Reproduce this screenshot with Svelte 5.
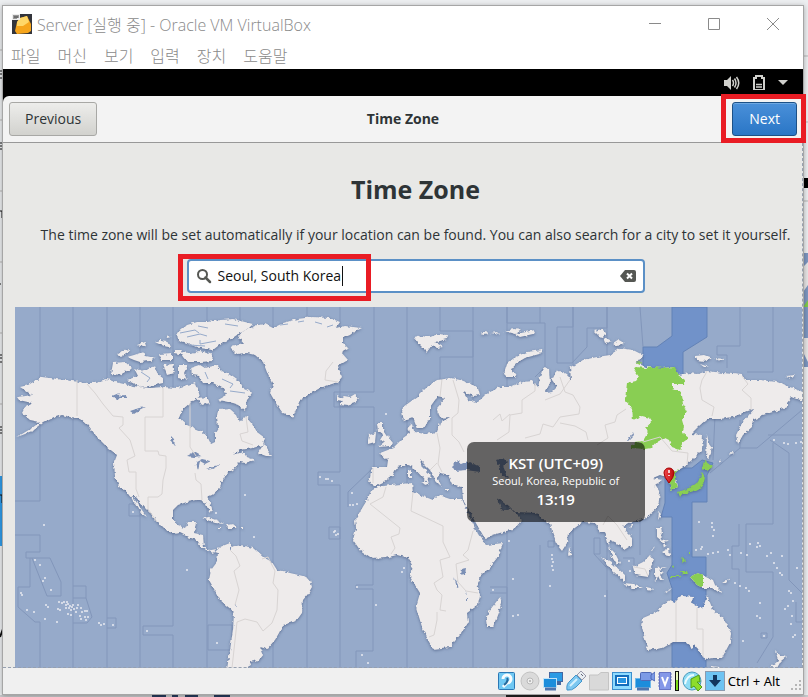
<script>
  let query = $state('Seoul, South Korea');
  const menus = ['파일', '머신', '보기', '입력', '장치', '도움말'];

  const meridians = [240, 273, 307, 407, 473, 507, 573, 607];

  const zoneLines = [
    'M40 307V501H15M15 535H40V552H26V558H50L61 582V596H47L32 558M30 558V587H18V607L35 622H40V668',
    'M73 307V668M73 586H86V598H73M86 598L92 617L87 623H73',
    'M107 307V668M107 618H116V628H107M140 307V668M140 504H129V516H140',
    'M173 307V626H143V635H173V668M207 307V668M208 625H232V650H208Z',
    'M340 307V472H318V485H340V668M374 307V392H334V407H374V467L348 492V507M373 559V585H356V589H373V651H356V668',
    'M329 527H340V539H329Z',
    'M440 307V331H473V357H440V380M507 307V323H545V367L535 377M540 307V323M573 307V327H557V363H572L587 347V328H607V307',
    'M640 307L643 347M740 307V346H717V355H727V368M747 372H773V307M740 420V448L710 473M740 448H757L802 410',
    'M768 435H802M770 440L789 453V524M773 443V524H746V572H773V637L757 663M715 415L713 460',
    'M739 524V546H732V569H739V668M789 524V580L802 593M796 602V622H802M573 524V668M607 590V668M640 505V555',
    'M490 587H507V593H490M507 593V668M540 545V668M548 541H554V547H548ZM594 538H600V554H594V538M594 554L606 567M623 558H634V566',
    'M761 633H767V638H761Z'
  ];

  const land = [
    // North and Central America
    'M42 377L57 379L87 383L92 383L107 379L115 382L133 386L150 388L163 387L177 388L187 385L195 383L198 390L200 397L190 403L182 410L179 418L187 425L203 432L208 438L211 444L215 442L215 433L218 428L217 417L218 410L230 409L237 415L240 422L246 416L252 423L257 432L265 438L263 445L253 448L240 450L233 455L243 452L247 457L255 460L245 463L240 462L233 470L227 473L222 482L220 488L212 495L207 497L212 508L211 513L208 509L205 502L197 500L187 502L178 505L173 510L173 518L177 525L185 528L188 522L196 522L194 533L203 535L204 547L210 550L216 549L213 553L202 548L197 540L188 537L180 533L173 534L157 523L155 518L145 508L134 496L132 496L147 517L142 514L135 503L125 490L120 488L115 477L114 463L117 455L107 447L97 437L88 425L80 418L70 417L62 415L53 418L43 423L33 431L17 437L32 428L40 422L30 420L22 413L25 407L32 403L19 400L17 397L32 395L20 387L28 385Z',
    // Canadian Arctic
    'M113 363L125 362L132 368L120 375L111 374Z',
    'M134 368L140 371L155 366L158 374L163 378L163 383L150 386L140 387L127 380L138 376Z',
    'M127 357L134 355L143 352L146 356L155 358L150 361L140 362L134 360Z',
    'M117 355L123 350L131 349L128 353L121 357ZM137 345L145 342L146 345L140 347Z',
    'M155 342L160 340L167 341L170 347L163 346ZM159 355L172 354L172 360L162 360ZM166 335L171 337L167 338Z',
    'M177 333L187 325L197 322L207 322L220 320L233 319L253 324L247 330L240 333L231 339L223 342L213 350L200 348L187 343L178 340Z',
    'M180 352L190 353L200 351L213 355L212 361L200 362L187 362L183 357ZM175 350L182 350L180 354L175 353Z',
    'M163 365L173 364L175 373L167 375ZM178 365L188 365L184 373L187 380L178 378Z',
    'M191 368L200 365L205 368L217 365L222 371L230 375L240 382L244 389L253 393L247 400L245 410L239 405L233 403L218 400L227 395L222 388L213 383L203 383L199 376L192 375Z',
    'M197 398L207 397L210 403L202 405ZM258 453L265 442L267 449L272 456L266 456Z',
    // Greenland and Iceland
    'M242 332L257 325L265 324L273 328L283 323L297 319L313 317L330 318L340 322L336 328L344 326L362 328L354 332L350 335L343 338L343 343L348 348L341 352L348 360L338 366L342 377L338 382L320 388L308 395L300 400L293 417L283 413L277 405L270 393L273 385L268 375L263 362L255 355L246 353L237 354L230 347L244 344L238 337Z',
    'M337 396L341 398L344 396L350 397L355 394L359 399L354 403L348 405L340 404L343 401L337 400Z',
    // Caribbean
    'M202 518L208 517L217 520L224 524L215 523ZM226 525L233 524L238 528L228 528ZM217 528H221V529H217ZM241 528H244V529H241Z',
    // South America
    'M215 552L220 547L230 543L231 547L240 545L253 548L263 557L272 562L277 570L283 571L290 573L303 576L310 580L312 587L308 594L303 600L302 613L297 620L290 623L283 625L279 633L275 640L267 649L260 647L263 655L259 660L250 662L251 666L246 669L227 669L230 650L233 630L234 612L227 606L220 600L213 587L209 580L211 570L217 562L218 553Z',
    // Atlantic Europe and Svalbard
    'M414 338L422 336L430 337L438 334L448 335L447 339L435 342L443 347L438 348L432 345L427 352L418 343ZM480 334L486 332L489 334L484 335Z',
    'M377 423L383 423L383 429L389 438L393 443L391 446L378 447L384 442L380 440L383 435L378 431ZM369 435L376 433L375 442L368 444L368 440Z',
    // Eurasia
    'M402 412L403 407L417 397L427 387L437 380L452 378L460 380L470 384L478 387L480 395L474 396L463 392L468 400L477 403L485 395L490 392L500 387L510 387L522 382L532 381L538 388L540 377L543 368L549 369L550 383L545 393L552 392L557 387L552 380L557 370L567 375L571 380L570 368L583 360L597 357L610 355L620 348L633 350L643 355L637 363L646 367L662 368L674 367L678 375L690 373L698 374L707 371L723 373L742 375L745 380L760 380L777 382L790 387L803 392V401L792 397L787 403L787 407L773 412L763 415L753 420L752 427L743 435L738 444L736 435L742 423L754 409L748 411L743 413L733 417L720 419L707 419L698 427L691 434L703 435L702 450L692 460L682 468L675 472L674 478L677 482L678 487L671 490L669 480L666 477L660 475L653 478L662 480L655 485L660 493L658 507L647 517L638 521L630 522L623 526L627 532L632 537L632 545L624 550L617 543L610 540L609 547L615 553L620 563L617 565L612 557L608 543L605 532L600 533L595 523L583 522L568 533L567 543L562 551L557 545L552 532L550 523L540 517L537 513L515 512L509 506L500 499L497 500L503 510L510 508L522 520L516 527L510 530L493 535L487 538L484 537L477 525L463 500L462 487L452 484L448 475L440 473L437 477L442 487L435 480L430 470L420 460L422 467L432 477L428 478L427 483L423 478L413 467L407 465L397 467L393 475L383 483L377 486L369 483L372 467L387 467L388 460L380 453L393 448L403 438L410 433L408 426L412 424L414 432L425 434L437 432L440 423L450 417L440 418L437 407L445 398L438 396L430 407L430 417L423 428L417 428L413 418L404 421Z',
    'M426 482L429 483L427 485L420 482ZM408 470L411 469L411 478L408 478ZM442 489H448V490H442ZM462 488L466 487L464 490Z',
    // Arctic Russia
    'M504 374L507 364L515 357L527 352L542 350L543 353L525 358L515 364L512 370L517 377L507 377ZM491 333L497 332L500 335ZM504 331L514 329L521 330L516 334ZM515 334L535 330L533 334L520 337Z',
    'M594 331L602 329L607 334L601 338ZM604 337L612 341L606 343ZM613 344L619 340L624 343L618 346ZM695 356L704 355L712 358L705 361L697 360ZM714 358L725 359L721 361ZM700 364L709 367L704 367ZM786 376L795 375L792 378Z',
    // Africa and Madagascar
    'M378 487L390 485L412 483L413 492L423 496L433 500L438 495L450 499L462 499L467 510L477 533L487 545L503 543L497 558L490 567L480 577L477 583L480 595L478 605L467 613L468 623L460 635L450 647L433 649L428 640L422 627L416 607L420 593L410 577L412 565L408 558L397 555L385 558L373 559L360 550L353 540L356 528L355 520L367 500L371 491Z',
    'M500 597L502 603L493 627L487 627L486 620L489 611Z',
    // Indian Ocean and South-East Asia
    'M569 548L572 555L568 556ZM602 557L612 563L625 575L625 582L615 573L608 566ZM623 583L634 584L643 588L632 588ZM646 587L655 589L654 590L646 589ZM663 593L672 588L669 591Z',
    'M633 567L643 562L650 555L654 560L652 565L648 577L635 575ZM655 568L667 567L659 570L664 573L660 575L664 580L660 580L658 576L656 582L655 575Z',
    'M657 528L661 528L662 533L660 538L664 540L668 542L664 543L657 537ZM662 552L669 548L670 555L667 556ZM663 544L667 546L664 548ZM651 551L656 545L652 551ZM659 512L661 514L658 519ZM630 524L634 525L631 528Z',
    'M707 435L709 443L712 447L710 457L706 459ZM720 460L722 461L718 463ZM731 452L734 453L728 455Z',
    // Australia, New Guinea, New Zealand
    'M643 618L657 612L665 603L671 600L676 602L679 597L683 596L693 597L692 603L702 609L705 602L707 595L713 610L723 618L727 625L731 633L730 643L722 658L714 658L707 659L702 656L700 653L697 648L695 645L692 650L690 646L685 642L673 642L663 648L647 650L646 643L642 627Z',
    'M690 577L697 573L703 575L713 580L715 585L723 593L717 591L712 588L703 588L697 585ZM722 583L730 578L726 583ZM775 650L780 655L786 657L781 661L777 668L771 667L778 661ZM711 666L720 667L716 670L711 668Z'
  ];

  const green = [
    'M636 367L646 368L653 367L663 368L675 367L678 375L685 380L684 384L672 384V388L680 391L682 395L683 404L687 412L682 420L684 427L682 433L689 438L682 443L680 450L672 447L669 440L665 438L657 442L652 448L646 449L630 448L634 443L643 442L648 433L646 428L652 421L650 418L642 416L633 420L632 408L625 400L627 383L636 381L639 377L633 368Z',
    'M678 469L675 474L675 479L678 487L671 490L669 481L667 477L672 473Z',
    'M678 492L684 490L690 488L694 485L698 482L702 472L705 477L704 482L702 487L694 491L687 493L683 493L680 497ZM704 461L709 464L714 466L707 471L702 469Z',
    'M690 577L697 573L703 575V588L697 585L692 579ZM681 571L687 571L688 574L683 574ZM673 565L675 569L672 568ZM683 556L685 561L682 563ZM670 576H680V577H670ZM688 552H690V553H688Z',
    'M636 363L641 362L640 365Z'
  ];

  const lakes = [
    'M112 396L119 393L117 396L125 395L127 398L121 398L117 400ZM130 411L139 408L146 407L140 410L134 414Z',
    'M171 436L174 439L175 446L171 441ZM187 456L194 452L201 456L194 457ZM196 462L202 459L211 461L205 464L200 461L198 470ZM206 470L214 466L220 465L212 469Z',
    'M452 466L458 460L461 464L468 461L480 467L480 472L466 470L455 471ZM496 460L503 458L507 462L503 466L508 478L501 476L500 468Z',
    'M461 569L466 568L465 574L460 575ZM454 577L459 587L457 588ZM466 591L467 600L466 600ZM627 442L633 433L634 436L628 442Z',
    'M230 546L232 549L230 550ZM235 604L237 606H235Z'
  ];

  const borders = [
    'M77 380V416M87 384L95 393L103 404L113 416L123 417V425L119 428L130 440L135 456L127 460L129 472L136 472L136 489L139 497',
    'M163 387V417H145V451H158L159 455L166 456L166 468L163 480L162 494L158 497L148 497L148 509L157 522',
    'M190 403V447L196 456M195 473L196 480L201 484L202 500M246 417L248 432L240 434L242 441L253 445M230 550L236 556L240 566L234 571L239 590L235 605',
    'M262 559L268 557L275 571L273 583L278 590L277 610L272 623L263 631L257 622L245 619L237 622L232 668M338 382L325 380L326 371L333 362',
    'M442 379L440 397M453 380L459 400L458 413L452 418L452 435L459 442L464 452M437 433L440 448L438 464L442 472M430 470L437 463M373 468V483',
    'M535 383L535 391L522 400L522 413L510 415L509 432L497 440M493 420L500 414L502 421L510 414M545 400L560 394L570 380M560 377L565 392L573 395L580 407L579 414L560 417L553 427L543 424L540 434L525 438M560 423L575 426L586 432L588 440',
    'M626 409L617 415L615 422L605 425L608 438L597 445M707 371L705 375L702 380L700 388L702 400L714 407L712 416M742 376L748 384L742 390L751 398L751 410M643 442L660 437L672 451L688 453L687 464M603 525L608 516L617 525L627 540',
    'M386 487L383 497L370 504L400 528L399 534L391 537L395 548L391 554M413 492L411 511L424 517L443 526L443 542L450 557L440 560L443 577L434 583L437 590L442 595L440 610L446 611M437 612V620L434 635L429 637M473 531L468 550L463 555L469 560L456 564L458 582L466 591L478 593',
    'M676 600V642M697 608V629H703V657M634 567L645 569L648 576'
  ];

  const isles = [
    [44, 525], [35, 560], [40, 565], [45, 578], [43, 581], [51, 590], [21, 593], [22, 595], [27, 610], [34, 612], [46, 605], [48, 607], [45, 619], [57, 622],
    [59, 602], [62, 603], [64, 602], [66, 605], [68, 604], [70, 606], [69, 608], [72, 607], [74, 609], [71, 610], [66, 608], [58, 609], [60, 610], [68, 614], [71, 615], [76, 612], [78, 605], [77, 608], [81, 608], [82, 612], [85, 611], [87, 611], [80, 616], [81, 619], [85, 617], [88, 617], [86, 620], [73, 605], [67, 602],
    [99, 623], [101, 625], [104, 624], [113, 625], [147, 631], [187, 570], [133, 512], [245, 495], [216, 513], [217, 643], [254, 537],
    [320, 477], [326, 479], [328, 479], [332, 481], [352, 493], [335, 531], [338, 534], [336, 535], [334, 532], [350, 505], [353, 505], [357, 504],
    [357, 587], [376, 605], [404, 568], [402, 572], [362, 655], [368, 663], [386, 414], [493, 590], [513, 579], [513, 616], [518, 615], [550, 586], [605, 596], [509, 541],
    [552, 555], [552, 559], [553, 562], [552, 566], [553, 570], [699, 522], [712, 523], [712, 527], [714, 530], [713, 536], [696, 550], [701, 549], [702, 547], [708, 554], [713, 553], [718, 552], [728, 550], [730, 555], [741, 553], [747, 555], [750, 544], [757, 547], [758, 543], [760, 546], [767, 556], [771, 553], [782, 556],
    [774, 563], [777, 568], [780, 573], [782, 575], [789, 591], [791, 593], [797, 568], [785, 609], [788, 606], [793, 601], [792, 616], [791, 624], [793, 637], [795, 635], [760, 603], [757, 616], [760, 618], [764, 636], [743, 641], [735, 583], [740, 586], [746, 588], [749, 591], [774, 440], [784, 443], [788, 444], [796, 443], [801, 442], [629, 561], [630, 571]
  ];
</script>

<div class="page">
  <svg class="backdrop" aria-hidden="true" viewBox="0 0 808 697" preserveAspectRatio="none">
    <rect width="808" height="697" fill="#eceef0" />
    <path d="M0 50H3M0 120H3M0 191H3M0 262H3M0 333H3M0 404H3M804 56H808M804 122H808M804 201H808" stroke="#b5b5b5" />
    <path d="M0 71H2M0 74H2M0 78H2M0 143H2M0 146H2M0 149H2M0 211H2V218M0 284H1M0 355H2M0 358H2M0 362H2M0 427H2M0 430H2M0 433H2" stroke="#111" stroke-width="1" fill="none" />
    <path d="M0 476H3V546H0Z" fill="#2f9be8" /><path d="M0 495H2V503" stroke="#111" fill="none" />
    <path d="M0 637L3 629M14 697L20 694" stroke="#111" stroke-width="2" />
    <path d="M803 178H808V188H803Z" fill="#000" />
    <path d="M803 253H808V367H803Z" fill="#7d96c0" /><path d="M803 267L808 262V285L803 292ZM803 338H808V362L803 352Z" fill="#e7e5e5" />
    <path d="M803 307L808 300V307Z" fill="#80ca4b" />
    <path d="M0 695H808V697H0Z" fill="#c9cbcd" />
    <path d="M152 696H166M172 696H178M185 696H198M214 696H230" stroke="#283b5c" stroke-width="2" />
    <path d="M506 696H560" stroke="#222" stroke-width="2" />
  </svg>

  <div class="window">
    <header class="titlebar">
      <svg class="app" viewBox="0 0 20 20" aria-hidden="true">
        <rect width="20" height="20" fill="#33353c" />
        <path d="M8 4L15 2L19 10V17L16 19L5 20L3 17L5 8Z" fill="#f6a51c" />
        <path d="M8 4L15 2L17 8L11 12L5 12L5 8Z" fill="#ffd768" />
        <rect width="8" height="6" fill="#eee" /><path d="M2 1V5M4 1V5M6 1V4M2 3H6" stroke="#444" />
      </svg>
      <span class="name">Server [실행 중] - Oracle VM VirtualBox</span>
      <div class="controls">
        <button aria-label="Minimize"><svg viewBox="0 0 12 12"><path d="M0 5.5H12" /></svg></button>
        <button aria-label="Maximize"><svg viewBox="0 0 12 12"><path d="M.5 .5H11.5V11.5H.5Z" /></svg></button>
        <button aria-label="Close"><svg viewBox="0 0 12 12"><path d="M0 0L12 12M12 0L0 12" /></svg></button>
      </div>
    </header>
    <nav class="menubar">
      {#each menus as menu}<button>{menu}</button>{/each}
    </nav>

    <div class="topbar">
      <svg width="16" height="16" viewBox="0 0 16 16" aria-label="Volume" role="img">
        <path d="M0 5H3L7 1V15L3 11H0Z" fill="#d0d0cc" />
        <path d="M8.500 5Q10.500 8 8.500 11M10.500 3.500Q13.500 8 10.500 12.500M12.500 2Q17 8 12.500 14" fill="none" stroke="#d0d0cc" stroke-width="1.500" />
      </svg>
      <svg width="12" height="16" viewBox="0 0 12 16" aria-label="Battery" role="img">
        <path d="M1 3H3V1H9V3H11V15H1Z" fill="none" stroke="#d0d0cc" stroke-width="2" /><path d="M3 9.500H9M3 12H9" stroke="#d0d0cc" stroke-width="1.500" />
      </svg>
      <svg class="caret" width="10" height="5" viewBox="0 0 10 5" aria-hidden="true"><path d="M0 0H10L5 5Z" fill="#d0d0cc" /></svg>
    </div>

    <div class="headerbar">
      <button class="push">Previous</button>
      <strong>Time Zone</strong>
      <div class="marked next"><button class="push primary">Next</button></div>
    </div>

    <main>
      <section class="intro">
        <h1>Time Zone</h1>
        <p>The time zone will be set automatically if your location can be found. You can also search for a city to set it yourself.</p>
        <div class="search">
          <svg class="lens" viewBox="0 0 16 16" aria-hidden="true"><circle cx="6.500" cy="6.500" r="4.500" fill="none" stroke="#555753" stroke-width="2" /><path d="M9.500 9.500L14 14" stroke="#555753" stroke-width="2.500" stroke-linecap="round" /></svg>
          <input type="text" aria-label="Search for a city" bind:value={query} />
          <span class="cursor"></span>
          <button class="clear" aria-label="Clear"><svg viewBox="0 0 16 12"><path d="M5 0H14Q16 0 16 2V10Q16 12 14 12H5L0 6Z" fill="#555753" /><path d="M7 3.500L12 8.500M12 3.500L7 8.500" stroke="#fff" stroke-width="2" /></svg></button>
          <span class="frame"></span>
        </div>
      </section>

      <div class="map">
        <svg viewBox="15 307 787 361" role="img" aria-label="World map of time zones">
          <defs>
            <filter id="coast" x="0" y="300" width="820" height="380" filterUnits="userSpaceOnUse" color-interpolation-filters="sRGB">
              <feTurbulence type="fractalNoise" baseFrequency="0.25" numOctaves="2" seed="4" result="n" />
              <feDisplacementMap in="SourceGraphic" in2="n" scale="4" xChannelSelector="R" yChannelSelector="G" result="d" />
              <feDropShadow in="d" dx="0" dy="1" stdDeviation="1.500" flood-color="#4c5f85" flood-opacity=".75" />
            </filter>
            <linearGradient id="pin" x2="1"><stop stop-color="#f3474a" /><stop offset="1" stop-color="#b80a0e" /></linearGradient>
          </defs>
          <rect x="15" y="307" width="787" height="361" fill="#96aaca" />
          <path fill="#7192c9" stroke="#6382b6" d="M672 307H707V337L683 352V378H643V347H657L672 336ZM665 477L682 468H692L702 460L713 463L707 475V502H692V557H706V668H672V588L667 573L672 565V517H661L665 503Z" />
          <g fill="none" stroke="#8296ba">
            {#each meridians as x}<path d="M{x} 307V668" />{/each}
            {#each zoneLines as d}<path {d} />{/each}
          </g>
          <g filter="url(#coast)">
            {#each land as d}<path {d} fill="#eeebeb" />{/each}
            {#each green as d}<path {d} fill="#89ce53" />{/each}
            {#each lakes as d}<path {d} fill="#7b8fb5" />{/each}
          </g>
          <g fill="none" stroke="#d8d4d3" stroke-linejoin="round">
            {#each borders as d}<path {d} />{/each}
          </g>
          <path fill="none" stroke="#96aaca" d="M180 333L195 330L199 333M187 337L200 334L207 336M200 340V344L216 341M189 345L205 346M198 326L208 328M225 324L238 326M141 372L150 378L147 382M205 372L208 379M222 379L233 384L230 388M230 391L245 393M280 325L288 324M298 322L304 321M315 322L322 324M327 327L333 325" />
          {#each isles as [x, y]}<circle cx={x} cy={y} r="1" fill="#e8eaf0" />{/each}
          <path d="M669 483Q664 477 664 473A5 5 0 0 1 674 473Q674 477 669 483Z" fill="url(#pin)" stroke="#a40000" /><path d="M669 470V473M669 475V476" stroke="#fff" stroke-width="1.500" />
        </svg>
        <div class="bubble">
          <b>KST (UTC+09)</b>
          <small>Seoul, Korea, Republic of</small>
          <b>13:19</b>
        </div>
      </div>
    </main>

    <footer>
      <svg viewBox="0 0 20 20" aria-label="Hard disk" role="img"><rect x="1.500" y="1.500" width="16" height="17" rx="1" fill="#70c8f3" stroke="#2b78b5" /><path d="M6 8A4 4 0 1 1 10 12L6 16" fill="none" stroke="#f7fbfd" stroke-width="3" /><path d="M10 7Q12 10 7 14" fill="none" stroke="#23689c" stroke-width="2" /></svg>
      <svg viewBox="0 0 20 20" aria-label="Optical disc" role="img"><circle cx="10" cy="10" r="9" fill="#dadada" stroke="#c2c2c2" /><circle cx="10" cy="10" r="3" fill="#eee" stroke="#b8b8b8" /><circle cx="10" cy="10" r="1" fill="#aaa" /></svg>
      <svg viewBox="0 0 20 20" aria-label="Network" role="img"><rect x="6.500" y="1.500" width="13" height="9" fill="#2a9ae4" stroke="#4467a0" /><path d="M12 12.500H18" stroke="#4467a0" stroke-width="3" /><rect x=".5" y="7.500" width="13" height="9" fill="#1c8ddb" stroke="#bfe2f7" /><path d="M2 18H13" stroke="#4f74ad" stroke-width="3" /></svg>
      <svg viewBox="0 0 20 20" aria-label="USB" role="img"><path d="M11 4L15 0L20 5L16 9Z" fill="#e9eef2" stroke="#99a" /><path d="M15 3L17 5" stroke="#667" /><path d="M1 19Q0 13 4 10L10 4L16 10L10 16Q6 20 1 19Z" fill="#7cc7f0" stroke="#4295cb" /><path d="M4 15L11 8" stroke="#d4f0fd" stroke-width="2" /></svg>
      <svg viewBox="0 0 20 20" aria-label="Shared folders" role="img"><path d="M.5 19V4H9L12 1.500H19.500V19Z" fill="#d9d9d9" stroke="#c4c4c4" /></svg>
      <svg viewBox="0 0 20 20" aria-label="Display" role="img"><rect x=".5" y="1.500" width="19" height="17" fill="#8edbff" stroke="#3c8fce" /><rect x="4" y="5" width="12" height="9" fill="#fff" stroke="#146dbb" stroke-width="2" /><rect x="6" y="7" width="8" height="5" fill="#2794e0" /></svg>
      <svg viewBox="0 0 20 20" aria-label="Recording" role="img"><rect x=".5" y="7.500" width="15" height="9" fill="#1c8ddb" stroke="#6db9ea" /><path d="M2 18H14" stroke="#4f74ad" stroke-width="3" /><rect x="5.500" y="1.500" width="11" height="8" rx="1" fill="#7d9be6" stroke="#4f68b5" /><path d="M16 4L20 1V10L16 8Z" fill="#7d9be6" stroke="#4f68b5" /></svg>
      <svg class="slim" viewBox="0 0 14 20" aria-label="Features" role="img"><path d="M0 3H14M0 6H14M0 9H14M0 12H14M0 15H14" stroke="#6f7fc4" /><rect x="1.500" y="1.500" width="11" height="17" fill="#8498e8" stroke="#6674c4" /><path d="M4 6L7 14L10 6" fill="none" stroke="#fff" stroke-width="2" /></svg>
      <svg class="load" viewBox="0 0 4 20" aria-label="CPU load" role="img"><rect width="4" height="20" fill="#111" /><rect x="1" y="1" width="2" height="8" fill="#e8f7b8" /><rect x="1" y="9" width="2" height="10" fill="#7fdc19" /></svg>
      <svg viewBox="0 0 20 20" aria-label="Mouse integration" role="img"><circle cx="10" cy="10" r="9" fill="#8fdcf4" stroke="#4a9bbd" /><path d="M9 8L17 4L18 11L15 11L20 16L16 20L12 15L9 17Z" fill="#8ddd2b" stroke="#4f9c18" /><path d="M3 13Q5 4 12 4" stroke="#eafbff" stroke-width="2" fill="none" /></svg>
      <svg viewBox="0 0 20 20" aria-label="Keyboard capture" role="img"><rect x=".5" y=".5" width="19" height="19" fill="#6ec3f2" stroke="#8a9bb0" /><path d="M8 4H12V9H16L10 16L4 9H8Z" fill="#12355e" /></svg>
      <span>Ctrl + Alt</span>
      <svg class="grip" viewBox="0 0 12 12" aria-hidden="true"><path d="M9 0H11V2H9ZM5 4H7V6H5ZM9 4H11V6H9ZM1 8H3V10H1ZM5 8H7V10H5ZM9 8H11V10H9Z" fill="#b5b5b5" /></svg>
    </footer>
  </div>
</div>

<style>
  :global(body) { margin: 0; }
  .page { position: relative; box-sizing: border-box; padding: 5px 4px 2px 2px; font-family: "Open Sans", "Noto Sans CJK KR", sans-serif; font-size: 14px; color: #2e3436; overflow: hidden; }
  .backdrop { position: absolute; inset: 0; width: 100%; height: 100%; }
  button { font: inherit; color: inherit; }
  .window { position: relative; border: 1px solid #a6a6a6; background: #fff; box-shadow: 0 1px 5px rgba(0, 0, 0, .3); }
  .titlebar { display: flex; align-items: center; height: 36px; padding: 0 1px 1px 9px; color: #8a8a8a; }
  .app { width: 20px; height: 20px; margin-right: 5px; }
  .name { flex: 1; font-size: 16px; font-weight: 300; white-space: nowrap; }
  .controls { display: flex; }
  .controls button { display: flex; align-items: center; justify-content: center; width: 59px; height: 36px; padding: 0; border: 0; background: none; }
  .controls svg { width: 12px; height: 12px; fill: none; stroke: #8a8a8a; }
  .menubar { display: flex; gap: 17px; height: 26px; padding-left: 8px; }
  .menubar button { padding: 0 0 2px; border: 0; background: none; font-family: "Noto Sans CJK KR", sans-serif; font-weight: 300; font-size: 16px; line-height: 24px; color: #8a8a8a; white-space: nowrap; }
  .topbar { display: flex; align-items: center; justify-content: flex-end; gap: 13px; height: 27px; padding-right: 15px; background: #000; }
  .headerbar { position: relative; display: grid; grid-template-columns: 1fr auto 1fr; align-items: center; height: 46px; padding: 0 6px; border-bottom: 1px solid #989898; border-radius: 6px 6px 0 0; background: #f3f3f3; box-shadow: 0 -6px #000; }
  .headerbar strong { padding-bottom: 2px; }
  .push { height: 34px; padding: 0 15px 2px; border: 1px solid #a8a8a5; border-radius: 3px; background: linear-gradient(#ededeb, #d2d2ce); justify-self: start; }
  .primary { padding: 0 16px 2px; border-color: #1c5187; background: linear-gradient(#4a90d9, #2a76c6); color: #fff; box-shadow: inset 0 1px #6fa9e2; }
  .marked { position: relative; justify-self: end; }
  .next::after { content: ""; position: absolute; inset: -8px -9px -7px -11px; border: 5px solid #e91c24; z-index: 2; pointer-events: none; }
  main { position: relative; padding-right: 1px; background: #e8e8e6; }
  main::after { content: ""; position: absolute; inset: 0; border: 1px dashed #96a0b0; border-width: 0 1px 1px 0; pointer-events: none; }
  .intro { display: flex; flex-direction: column; align-items: center; padding: 29px 0 14px 26px; }
  h1 { margin: 0; font-size: 25px; line-height: 34px; }
  p { margin: 19px 0 14px; line-height: 20px; white-space: nowrap; }
  .search { position: relative; display: flex; align-items: center; width: 458px; height: 34px; }
  .search input { box-sizing: border-box; width: 100%; height: 34px; padding: 0 36px 2px 29px; border: 2px solid #5b90c6; border-radius: 4px; background: #fff; font: inherit; color: #111; outline: 0; }
  .lens { position: absolute; left: 9px; width: 16px; height: 16px; }
  .cursor { position: absolute; left: 155px; width: 1px; height: 20px; background: #111; }
  .clear { position: absolute; right: 9px; display: flex; padding: 0; border: 0; background: none; }
  .clear svg { width: 16px; height: 12px; }
  .frame { position: absolute; inset: -5px 274px -8px -9px; border: 5px solid #e91c24; pointer-events: none; }
  .map { position: relative; margin-left: 12px; }
  .map > svg { display: block; width: 100%; height: auto; }
  .bubble { position: absolute; box-sizing: border-box; left: 57.400%; top: 37.500%; display: flex; flex-direction: column; align-items: center; justify-content: center; width: 178px; height: 80px; padding-bottom: 2px; border-radius: 7px; background: rgba(0, 0, 0, .58); color: #fff; line-height: 18px; white-space: nowrap; }
  .bubble b { font-size: 15px; font-weight: 600; }
  .bubble small { font-size: 11px; }
  footer { display: flex; align-items: center; gap: 3px; justify-content: flex-end; height: 26px; background: #f0f0f0; color: #000; }
  footer svg { width: 20px; height: 20px; }
  footer .slim { width: 14px; }
  footer .load { width: 4px; }
  footer span { padding-bottom: 1px; font-family: "Noto Sans", sans-serif; font-size: 13px; white-space: nowrap; }
  footer .grip { width: 12px; height: 12px; margin: 10px 1px 0 7px; }
</style>
